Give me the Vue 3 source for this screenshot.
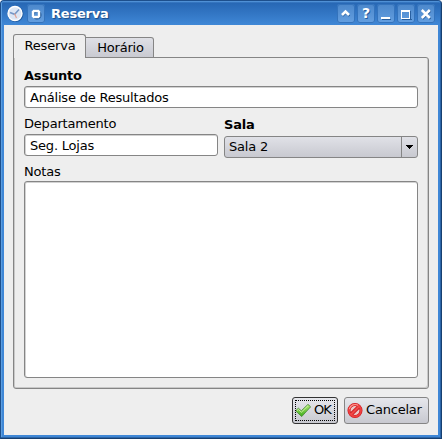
<script setup>
import { ref } from 'vue'

const subject = ref('Análise de Resultados')
const department = ref('Seg. Lojas')
const room = ref('Sala 2')
const notes = ref('')
</script>

<template>
  <div class="window">
    <header class="titlebar">
      <svg class="clock" width="18" height="18" viewBox="0 0 18 18">
        <circle cx="9.5" cy="10" r="8" fill="#1f5ba2" />
        <circle cx="9" cy="9.5" r="7" fill="#dde6f4" stroke="#fff" stroke-width="1.4" />
        <path d="M8.5 10.5 L13 5.5" stroke="#7396c6" stroke-width="1.5" />
        <path d="M4 8.5 L9 10.5" stroke="#7396c6" stroke-width="1.8" />
        <path d="M8.5 9.5 L10.5 14" stroke="#e3a294" stroke-width="1.2" />
      </svg>
      <span class="tb">
        <svg width="18" height="19" viewBox="0 0 18 19">
          <circle cx="10" cy="11" r="3.6" fill="none" stroke="#285f9f" stroke-width="2" />
          <path d="M6 6h6v1h1v6h-1v1H6v-1H5V7h1z M7 8v4h4V8z" fill="#fff" stroke="#fff" stroke-width=".4" fill-rule="evenodd" />
        </svg>
      </span>
      <h1>Reserva</h1>
      <div class="controls">
        <span class="tb">
          <svg width="18" height="19" viewBox="0 0 18 19">
            <path d="M5.5 12 L9 8.5 L12.5 12" class="shade" />
            <path d="M5 11 L8.5 7.5 L12 11" class="glyph thick" />
          </svg>
        </span>
        <span class="tb q">?</span>
        <span class="tb">
          <svg width="18" height="19" viewBox="0 0 18 19">
            <path d="M5 15.5h9" stroke="#285f9f" />
            <path d="M4 14h9" class="glyph" />
          </svg>
        </span>
        <span class="tb">
          <svg width="18" height="19" viewBox="0 0 18 19" shape-rendering="crispEdges">
            <path d="M5 15.5h9.5M13.5 7v9" stroke="#285f9f" />
            <path d="M4 6h9v9H4z M5 8v6h7V8z" fill="#fff" fill-rule="evenodd" />
          </svg>
        </span>
        <span class="tb">
          <svg width="18" height="19" viewBox="0 0 18 19">
            <path d="M5.5 7l8 8m0-8l-8 8" class="shade" />
            <path d="M4.8 6l8 8m0-8l-8 8" class="glyph thick" />
          </svg>
        </span>
      </div>
    </header>

    <main class="body">
      <nav class="tabs">
        <span class="tab active">Reserva</span>
        <span class="tab">Horário</span>
      </nav>
      <section class="panel">
        <label class="bold">Assunto</label>
        <input v-model="subject" class="field" type="text" />
        <div class="columns">
          <div class="col">
            <label>Departamento</label>
            <input v-model="department" class="field" type="text" />
          </div>
          <div class="col room">
            <label class="bold">Sala</label>
            <div class="combo">
              <span class="value">{{ room }}</span>
              <span class="arrow">
                <svg width="7" height="4" viewBox="0 0 7 4" shape-rendering="crispEdges">
                  <path d="M0 0h7v1H6v1H5v1H4v1H3V3H2V2H1V1H0z" fill="#000" />
                </svg>
              </span>
            </div>
          </div>
        </div>
        <label>Notas</label>
        <textarea v-model="notes" class="notes"></textarea>
      </section>
      <footer class="actions">
        <button class="btn ok">
          <svg width="16" height="16" viewBox="0 0 16 16">
            <defs>
              <linearGradient id="green" x1="0" y1="0" x2="0" y2="1">
                <stop offset="0" stop-color="#b5ee78" />
                <stop offset="1" stop-color="#38a818" />
              </linearGradient>
            </defs>
            <path d="M.6 7.8L3.4 5.2 6.3 7.8 13 1.4 15.6 3.8 6.7 13.6z" fill="url(#green)" stroke="#4b8d38" stroke-width=".9" stroke-linejoin="round" />
            <path d="M2 7.6l1.5-1.2 2.9 2.8L13 2.7" fill="none" stroke="#d2f6a8" stroke-width=".9" />
          </svg>
          <span>OK</span>
        </button>
        <button class="btn cancel">
          <svg width="16" height="16" viewBox="0 0 16 16">
            <circle cx="8" cy="7.5" r="6" fill="#eccaca" stroke="#c9141b" stroke-width="3" />
            <path d="M3.8 11.7L12.2 3.3" stroke="#c9141b" stroke-width="3.8" />
            <circle cx="8" cy="7.5" r="6" fill="none" stroke="#ee4040" stroke-width="1.9" />
            <path d="M3.8 11.7L12.2 3.3" stroke="#f04848" stroke-width="2.2" />
            <path d="M2.3 6.1A6 6 0 0 1 11 2.3" fill="none" stroke="#ff9a94" stroke-width="1.1" />
          </svg>
          <span>Cancelar</span>
        </button>
      </footer>
    </main>
  </div>
</template>

<style>
body {
  margin: 0;
  background: #fff;
}
</style>

<style scoped>
* {
  box-sizing: border-box;
}
.window {
  width: 442px;
  height: 439px;
  display: flex;
  flex-direction: column;
  padding: 0 3px 3px;
  border: 1px solid #1d4f8c;
  border-right-color: #173f70;
  border-bottom-color: #173f70;
  border-radius: 4px 4px 0 0;
  background: #3f87d6;
  box-shadow: inset -1px -1px #2c66a8, inset 1px 0 #5c9ee0;
  font: 13px/15px "DejaVu Sans", sans-serif;
  letter-spacing: -.2px;
  color: #000;
}
.titlebar {
  height: 24px;
  flex: none;
  margin: 0 -2px;
  padding: 3px 5px 0 4px;
  display: flex;
  align-items: flex-start;
  border-radius: 3px 3px 0 0;
  background: linear-gradient(#5c9ee0 0, #2767b4 2px, #3f87d6 100%);
}
.clock {
  margin-right: 3px;
}
.tb {
  width: 18px;
  height: 19px;
  display: flex;
  border-radius: 3px;
  background: linear-gradient(#4b87cb, #649fe0);
  box-shadow: inset 0 0 0 1px #3473bc;
}
.glyph {
  fill: none;
  stroke: #fff;
  stroke-width: 2;
}
.glyph.thick {
  stroke-width: 2.5;
}
.shade {
  fill: none;
  stroke: #285f9f;
  stroke-width: 2;
}
.q {
  justify-content: center;
  font: bold 14px/19px "DejaVu Sans", sans-serif;
  color: #fff;
  text-shadow: 1px 1px 0 #285f9f;
}
h1 {
  flex: 1;
  margin: 0 0 0 6px;
  font: bold 13px/19px "DejaVu Sans", sans-serif;
  color: #fff;
  text-shadow: 1px 1px 1px #1b4a85;
}
.controls {
  display: flex;
  gap: 2px;
}
.body {
  flex: 1;
  display: flex;
  flex-direction: column;
  padding: 9px 9px 11px;
  background: #eee;
}
.tabs {
  display: flex;
  align-items: flex-start;
  height: 23px;
}
.tab {
  width: 68px;
  height: 21px;
  margin-top: 3px;
  border: 1px solid #858585;
  border-left: 0;
  border-radius: 0 3px 0 0;
  background: linear-gradient(#dfe0e6, #c9cad1);
  line-height: 19px;
  text-align: center;
  padding-left: 2px;
}
.tab.active {
  position: relative;
  width: 73px;
  height: 24px;
  margin-top: 0;
  border: 1px solid #858585;
  border-bottom: 0;
  border-radius: 3px 3px 0 0;
  background: #eee;
  line-height: 22px;
  padding-left: 1px;
}
.panel {
  height: 332px;
  display: flex;
  flex-direction: column;
  padding: 10px;
  border: 1px solid #858585;
  border-radius: 0 3px 3px 3px;
  box-shadow: inset 1px 0 #c9c9c9, inset -1px -1px #c9c9c9;
}
label {
  display: block;
  height: 15px;
}
.bold {
  font-weight: bold;
}
.field,
.notes {
  display: block;
  width: 100%;
  margin: 0;
  border: 1px solid #858585;
  border-radius: 3px;
  outline: 0;
  background: #fff;
  box-shadow: inset 0 1px #d2d2d2, inset 1px 0 #d2d2d2;
  font: inherit;
  letter-spacing: inherit;
  color: inherit;
}
.field {
  height: 22px;
  padding: 0 5px;
}
.panel > .field {
  margin-top: 3px;
}
.columns {
  display: grid;
  grid-template-columns: 194px 194px;
  gap: 6px;
  margin: 8px 0 6px;
}
.col .field {
  margin-top: 3px;
}
.room {
  padding-top: 1px;
}
.combo {
  display: flex;
  height: 22px;
  margin-top: 4px;
  border: 1px solid #858585;
  border-radius: 3px;
  background: linear-gradient(#e0e1e7, #c8c9d0);
}
.value {
  flex: 1;
  padding-left: 4px;
  line-height: 20px;
}
.arrow {
  width: 16px;
  display: flex;
  align-items: center;
  justify-content: center;
  border-left: 1px solid #858585;
}
.notes {
  height: 197px;
  margin-top: 2px;
  padding: 4px;
  resize: none;
}
.actions {
  display: flex;
  justify-content: flex-end;
  gap: 6px;
  margin-top: 8px;
}
.btn {
  display: flex;
  align-items: center;
  gap: 2px;
  height: 27px;
  margin: 0;
  padding: 0 3px;
  border: 1px solid #858585;
  border-radius: 3px;
  background: linear-gradient(#e6e7ec, #c8c9d0);
  font: inherit;
  letter-spacing: inherit;
  color: inherit;
}
.btn svg {
  margin-left: -1px;
  margin-right: 1px;
}
.btn span {
  position: relative;
  top: -1px;
}
.ok {
  width: 46px;
  border-color: #333;
  outline: 1px dotted #000;
  outline-offset: -4px;
}
.ok span {
  letter-spacing: -1px;
}
.cancel {
  width: 85px;
}
</style>
